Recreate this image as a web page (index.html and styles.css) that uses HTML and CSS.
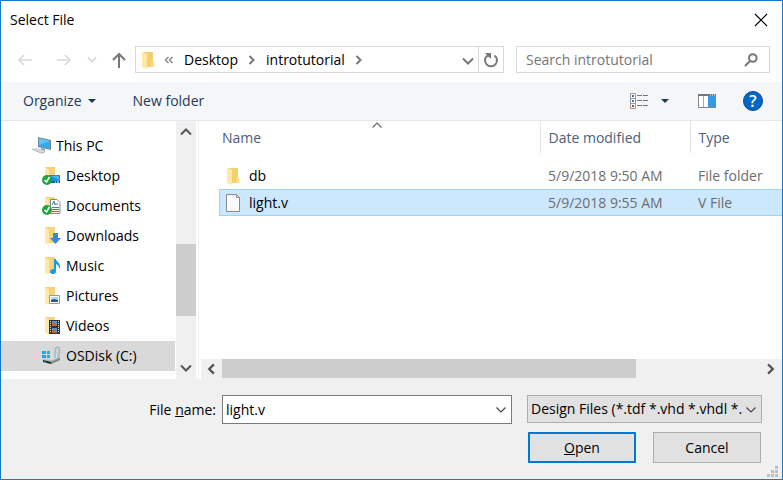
FILE: index.html
```html
<!DOCTYPE html>
<html lang="en">
<head>
<meta charset="utf-8">
<title>Select File</title>
<link rel="stylesheet" href="styles.css">
</head>
<body>
<svg class="defs" aria-hidden="true">
  <symbol id="folder" viewBox="0 0 16 18"><path d="M3 1h10v10h1v5H4z" fill="#f3cf70"/><path d="M11 11h3v5h-3z" fill="#ffdc7d"/><path d="M2 1h1l4 2v15l-5-2z" fill="#ffe9a6"/></symbol>
  <symbol id="open-folder" viewBox="0 0 20 20"><path d="M4 1h10v16H4z" fill="#f5d37b"/><path d="M4 1l4 3v15l-4-2z" fill="#ffe9a9"/></symbol>
  <symbol id="check" viewBox="0 0 20 20"><circle cx="6" cy="14" r="5" fill="#21a33d"/><path d="M3.500 14l2 2 3-5" fill="none" stroke="#fff" stroke-width="1.500"/></symbol>
  <symbol id="down" viewBox="0 0 12 8"><path d="M1 1.500l5 5 5-5" fill="none" stroke="currentColor" stroke-width="2"/></symbol>
  <symbol id="thin-down" viewBox="0 0 12 8"><path d="M1.500 1.500L6 6l4.500-4.500" fill="none" stroke="currentColor" stroke-width="1.200"/></symbol>
  <symbol id="right" viewBox="0 0 8 12"><path d="M1.500 2l4 4-4 4" fill="none" stroke="currentColor" stroke-width="2"/></symbol>
</svg>
<main class="dialog">
  <header class="titlebar">
    <h1>Select File</h1>
    <button class="plain close" aria-label="Close"><svg width="14" height="14" viewBox="0 0 14 14"><path d="M1 1l12 12M13 1L1 13" fill="none" stroke="#000" stroke-width="1.200"/></svg></button>
  </header>

  <nav class="navrow" aria-label="Location">
    <div class="history">
      <button class="plain off back" aria-label="Back"><svg width="16" height="12" viewBox="0 0 16 12"><path d="M15 6H2M7 1L2 6l5 5" fill="none" stroke="currentColor" stroke-width="1.700"/></svg></button>
      <button class="plain off" aria-label="Forward"><svg width="16" height="12" viewBox="0 0 16 12"><path d="M1 6h13M9 1l5 5-5 5" fill="none" stroke="currentColor" stroke-width="1.700"/></svg></button>
      <button class="plain off" aria-label="Recent locations"><svg width="10" height="7"><use href="#down"/></svg></button>
      <button class="plain" aria-label="Up"><svg width="14" height="16" viewBox="0 0 14 16"><path d="M7 16V2M1 8l6-6 6 6" fill="none" stroke="currentColor" stroke-width="2"/></svg></button>
    </div>
    <div class="address">
      <svg width="16" height="18"><use href="#folder"/></svg>
      <svg class="more" width="10" height="8" viewBox="0 0 10 8"><path d="M4.500 1l-3 3 3 3M8.500 1l-3 3 3 3" fill="none" stroke="currentColor" stroke-width="1.200"/></svg>
      <a href="#desktop">Desktop</a>
      <svg width="8" height="12"><use href="#right"/></svg>
      <a href="#introtutorial">introtutorial</a>
      <svg width="8" height="12"><use href="#right"/></svg>
      <button class="plain history-menu" aria-label="Previous locations"><svg width="12" height="8"><use href="#down"/></svg></button>
      <button class="plain refresh" aria-label="Refresh"><svg width="16" height="16" viewBox="0 0 16 16"><path d="M11.500 3.500A6 6 0 1 1 4.500 3.500" fill="none" stroke="currentColor" stroke-width="2"/><path d="M2 1h6v6L6 5 4 5 4 3z" fill="currentColor"/></svg></button>
    </div>
    <div class="search">
      <input type="search" placeholder="Search introtutorial" aria-label="Search introtutorial">
      <svg width="14" height="14" viewBox="0 0 14 14"><circle cx="8.800" cy="5" r="3.800" fill="none" stroke="currentColor" stroke-width="2"/><path d="M6 8l-5 5" stroke="currentColor" stroke-width="2"/></svg>
    </div>
  </nav>

  <div class="toolbar">
    <button class="plain organize">Organize <svg width="8" height="4" viewBox="0 0 8 4"><path d="M0 0h8L4 4z" fill="currentColor"/></svg></button>
    <button class="plain">New folder</button>
    <div class="tools">
      <button class="plain views" aria-label="Change your view"><svg width="18" height="16" viewBox="0 0 18 16"><path d="M.5.5h5v15h-5zM.5 5.500h5M.5 10.500h5" fill="#fff" stroke="#999"/><path d="M2 2h2v2H2z" fill="#2875b8"/><path d="M2 7h2v2H2z" fill="#4a78a8"/><path d="M2 12h2v2H2z" fill="#c23a22"/><path d="M7 2.500h5M13 2.500h5M7 7.500h5M13 7.500h5M7 12.500h5M13 12.500h5" stroke="#777"/></svg></button>
      <button class="plain" aria-label="More options"><svg width="8" height="4" viewBox="0 0 8 4"><path d="M0 0h8L4 4z" fill="currentColor"/></svg></button>
      <button class="plain preview" aria-label="Show the preview pane"><svg width="18" height="14" viewBox="0 0 18 14"><path d="M.5.5h17v13H.5z" fill="#fff" stroke="#858585"/><path d="M0 0h18v2H0z" fill="#777"/><path d="M12 1h1M14 1h1M16 1h1" stroke="#fff"/><path d="M5.500 2v11" stroke="#aaa"/><path d="M10 2h7v11h-7z" fill="#3898e5"/></svg></button>
      <button class="plain help" aria-label="Help"><span>?</span></button>
    </div>
  </div>

  <div class="content">
    <aside class="sidebar">
      <ul class="tree">
        <li class="root"><a href="#pc"><svg width="20" height="20" viewBox="0 0 20 20"><path d="M6 1l13 3v10L6 11z" fill="#6f8793"/><path d="M7 2l11 3v8L7 10z" fill="#38a9ef"/><path d="M7 2l11 3-11 4z" fill="#66c2f5"/><path d="M9 12l4 1v3H9z" fill="#8796a0"/><path d="M0 13l5-1 9 3-5 2z" fill="#d2d8dd"/><path d="M0 13l9 4 4-1" fill="none" stroke="#a9b2b8"/></svg>This PC</a></li>
        <li><a href="#desktop"><svg width="20" height="20" viewBox="0 0 20 20"><use href="#open-folder"/><path d="M8 9h11v8H8z" fill="#168fdd"/><path d="M9 10h9v4z" fill="#42b3f3"/><path d="M8 15h11v2H8z" fill="#0965ad"/><path d="M14 16h1M16 16h2" stroke="#fff"/><use href="#check"/></svg>Desktop</a></li>
        <li><a href="#documents"><svg width="20" height="20" viewBox="0 0 20 20"><use href="#open-folder"/><path d="M9.500 3.500H16l3 3v11H9.500z" fill="#fff" stroke="#888"/><path d="M11 9l2-4 1 4M14 8h3M11 11.500h7M11 13.500h7M11 15.500h7" fill="none" stroke="#397eb8"/><use href="#check"/></svg>Documents</a></li>
        <li><a href="#downloads"><svg width="20" height="20" viewBox="0 0 20 20"><use href="#open-folder"/><path d="M12 7h5v5h3l-5.500 6L9 12h3z" fill="#338ad7"/></svg>Downloads</a></li>
        <li><a href="#music"><svg width="20" height="20" viewBox="0 0 20 20"><use href="#open-folder"/><path d="M13 3h2c0 3 4 3 4 8l-1 2c0-3-1-4-3-5v7c0 2-1 3-3 3-4 0-4-5 1-5z" fill="#129bea"/></svg>Music</a></li>
        <li><a href="#pictures"><svg width="20" height="20" viewBox="0 0 20 20"><use href="#open-folder"/><path d="M8.500 9.500h10v8h-10z" fill="#fff" stroke="#999"/><path d="M10 11h7v5h-7z" fill="#a9d8f5"/><path d="M10 14l3-1 4 1v2h-7z" fill="#275d80"/></svg>Pictures</a></li>
        <li><a href="#videos"><svg width="20" height="20" viewBox="0 0 20 20"><use href="#open-folder"/><path d="M8 4h11v14H8z" fill="#333"/><path d="M9.500 5v12M17.500 5v12" stroke="#ddd" stroke-dasharray="1 1"/><path d="M11 5h5v5h-5zM11 12h5v5h-5z" fill="#5794dc"/><path d="M11 8l3-2 2 4h-5zM11 15l3-2 2 4h-5z" fill="#c36827"/></svg>Videos</a></li>
        <li class="current"><a href="#osdisk" aria-current="true"><svg width="20" height="20" viewBox="0 0 20 20"><path d="M1 5h4v3H1zM6 5h3v3H6zM1 9h4v3H1zM6 9h3v3H6z" fill="#12afe5"/><path d="M14.500 7V3.500c0-3 4-3 4 0V7" fill="none" stroke="#a9b6be" stroke-width="1.500"/><path d="M12 12l7-4v4l-9 5V14z" fill="#d9dddf"/><path d="M13 6l6 1v6l-6-1z" fill="#b0c1cb"/><path d="M15 7l1 0v5l-1 0z" fill="#dce5ea"/><path d="M2 13l9 1 8-3v3l-9 4-8-2z" fill="#aeb4b8"/><path d="M2 14l8 2v2l-8-2z" fill="#24292b"/><path d="M10 16l9-4v2l-9 4z" fill="#80878b"/><path d="M3 16h2" stroke="#30d16a"/></svg>OSDisk (C:)</a></li>
      </ul>
      <div class="vscroll" aria-hidden="true">
        <svg class="flip" width="12" height="8"><use href="#down"/></svg>
        <div class="vtrack"><div class="vthumb"></div></div>
        <svg width="12" height="8"><use href="#down"/></svg>
      </div>
    </aside>

    <section class="files" aria-label="Files">
      <svg class="sort" width="12" height="8"><use href="#thin-down"/></svg>
      <table>
        <colgroup><col><col class="col-date"><col class="col-type"></colgroup>
        <thead><tr><th scope="col">Name</th><th scope="col">Date modified</th><th scope="col">Type</th></tr></thead>
        <tbody>
          <tr class="spacer" aria-hidden="true"><td colspan="3"></td></tr>
          <tr><td><div class="file"><svg width="16" height="18"><use href="#folder"/></svg>db</div></td><td>5/9/2018 9:50 AM</td><td>File folder</td></tr>
          <tr class="selected"><td><div class="file"><svg width="16" height="18" viewBox="0 0 16 18"><path d="M1.500.5h10l3 3v14h-13z" fill="#fafafa" stroke="#8b8b8b"/><path d="M11.500.5v3h3" fill="none" stroke="#8b8b8b"/></svg>light.v</div></td><td>5/9/2018 9:55 AM</td><td>V File</td></tr>
        </tbody>
      </table>
      <div class="hscroll" aria-hidden="true">
        <svg class="mirror" width="10" height="14" viewBox="0 0 8 12"><use href="#right"/></svg>
        <div class="htrack"><div class="hthumb"></div></div>
        <svg width="10" height="14" viewBox="0 0 8 12"><use href="#right"/></svg>
      </div>
    </section>
  </div>

  <form class="footer">
    <label class="name-label" for="filename">File <u>n</u>ame:</label>
    <div class="combo">
      <input id="filename" type="text" value="light.v">
      <button type="button" class="plain" aria-label="Recent files"><svg width="12" height="8"><use href="#thin-down"/></svg></button>
    </div>
    <div class="filter">
      <select aria-label="File type"><option>Design Files (*.tdf *.vhd *.vhdl *.</option></select>
      <svg width="12" height="8"><use href="#thin-down"/></svg>
    </div>
    <div class="actions">
      <button type="submit" class="btn primary"><u>O</u>pen</button>
      <button type="button" class="btn">Cancel</button>
    </div>
    <svg class="grip" width="12" height="12" viewBox="0 0 12 12" aria-hidden="true"><path d="M8 0h3v3H8zM4 4h3v3H4zM8 4h3v3H8zM0 8h3v3H0zM4 8h3v3H4zM8 8h3v3H8z" fill="#bfbfbf"/></svg>
  </form>
</main>
</body>
</html>
```
FILE: styles.css
```css
* { box-sizing: border-box; }
body, input, select, button { font: 14px/20px "Open Sans", "Noto Sans", sans-serif; }
body { margin: 0; color: #000; background: #fff; }
svg { display: block; flex: none; }
a { color: inherit; text-decoration: none; }
.defs { position: absolute; width: 0; height: 0; }
.plain { display: flex; align-items: center; padding: 0; border: 0; background: none; color: inherit; }

.dialog { display: flex; flex-direction: column; min-height: 100vh; border: 1px solid #1979ca; }

.titlebar { display: flex; align-items: center; justify-content: space-between; height: 38px; padding: 0 14px 0 9px; }
.titlebar h1 { margin: 0; font-size: 14px; font-weight: 400; }

.navrow { display: flex; align-items: center; height: 43px; padding: 0 12px 2px 16px; color: #777; }
.history { display: flex; align-items: center; justify-content: space-between; width: 109px; margin-right: 9px; }
.history .off { color: #d9d9d9; }
.history .back { margin-right: 8px; }
.address { display: flex; flex: 1; align-items: center; height: 27px; padding-left: 4px; border: 1px solid #d9d9d9; }
.address a { margin: 0 10px; color: #000; }
.address .more { margin-left: 8px; }
.history-menu { height: 100%; margin-left: auto; padding: 2px 4px 0 0; }
.refresh { align-self: stretch; padding: 0 4px; border-left: 1px solid #d9d9d9; }
.search { display: flex; flex: 0 1 254px; align-items: center; height: 27px; margin-left: 12px; padding: 0 11px 0 9px; border: 1px solid #d9d9d9; }
.search input { flex: 1; min-width: 0; padding: 0; border: 0; outline: 0; background: none; }
.search input::placeholder { color: #767676; opacity: 1; }

.toolbar { display: flex; align-items: center; height: 39px; padding: 0 19px 0 22px; gap: 37px; border-bottom: 1px solid #e5e7ea; background: #f4f6f8; color: #1e395b; }
.organize { gap: 6px; }
.tools { display: flex; align-items: center; margin-left: auto; }
.views { margin-right: 13px; }
.preview { margin: 0 27px 0 29px; }
.help { justify-content: center; width: 20px; height: 20px; border: 1px solid #07488d; border-radius: 50%; background: #0067c8; color: #fff; font-weight: 600; font-size: 16px; }

.content { display: flex; flex: 1; }
.sidebar { display: flex; width: 198px; padding-right: 2px; border-right: 1px solid #f0f0f0; }
.tree { flex: 1; margin: 0; padding: 10px 0 7px; list-style: none; }
.tree a { display: flex; align-items: center; height: 30px; padding-left: 40px; gap: 5px; white-space: nowrap; }
.tree .root a { padding-left: 31px; gap: 4px; }
.tree .current { background: #d9d9d9; }
.vscroll { display: flex; flex-direction: column; align-items: center; width: 20px; padding: 7px 0; margin-left: 1px; background: #f0f0f0; color: #555; }
.vtrack { flex: 1; align-self: stretch; padding-top: 108px; }
.vthumb { height: 72px; background: #cdcdcd; }
.flip { transform: rotate(180deg); }

.files { position: relative; display: flex; flex: 1; flex-direction: column; min-width: 0; padding-left: 2px; }
.sort { position: absolute; left: 172px; top: 0; color: #666; transform: rotate(180deg); }
table { margin-left: 18px; border-collapse: collapse; table-layout: fixed; }
.col-date { width: 150px; }
.col-type { width: 92px; }
th { height: 32px; padding: 2px 0 0 8px; color: #4c607a; font-weight: 400; text-align: left; white-space: nowrap; }
th:first-child { padding-left: 3px; }
th + th { border-left: 1px solid #e5e5e5; }
td { height: 27px; padding: 0 0 0 8px; color: #6d6d6d; white-space: nowrap; }
.spacer td { height: 9px; }
td:first-child { padding-left: 6px; color: #000; }
.file { display: flex; align-items: center; gap: 8px; }
.selected { background: #cce8ff; box-shadow: inset 1px 1px #99d1ff, inset 0 -1px #99d1ff; }
.hscroll { display: flex; align-items: center; height: 20px; margin-top: auto; padding: 0 6px 0 5px; background: #f0f0f0; color: #555; }
.htrack { flex: 1; align-self: stretch; padding: 0 6px; }
.hthumb { width: 77%; height: 19px; background: #cdcdcd; }
.mirror { transform: rotate(180deg); }

.footer { position: relative; display: grid; grid-template-columns: 221px 1fr 235px; row-gap: 8px; padding: 16px 20px 16px 0; background: #f0f0f0; }
.name-label { padding-right: 6px; line-height: 29px; text-align: right; }
.combo { display: flex; height: 29px; margin-right: 15px; padding: 0 4px 0 3px; border: 1px solid #7a7a7a; background: #fff; color: #444; }
.combo input { flex: 1; min-width: 0; padding: 0; border: 0; outline: 0; background: none; }
.filter { position: relative; }
.filter select { width: 100%; height: 28px; padding: 0 16px 0 3px; border: 1px solid #adadad; border-radius: 0; background: #e1e1e1; color: #000; appearance: none; }
.filter svg { position: absolute; right: 5px; top: 11px; color: #444; pointer-events: none; }
.actions { display: grid; grid-column: 3; grid-template-columns: 1fr 1fr; gap: 17px; padding: 0 1px; }
.btn { height: 31px; padding: 0; border: 1px solid #adadad; background: #e1e1e1; color: #000; }
.primary { border: 2px solid #0078d7; }
.grip { position: absolute; right: 3px; bottom: 1px; }
```
